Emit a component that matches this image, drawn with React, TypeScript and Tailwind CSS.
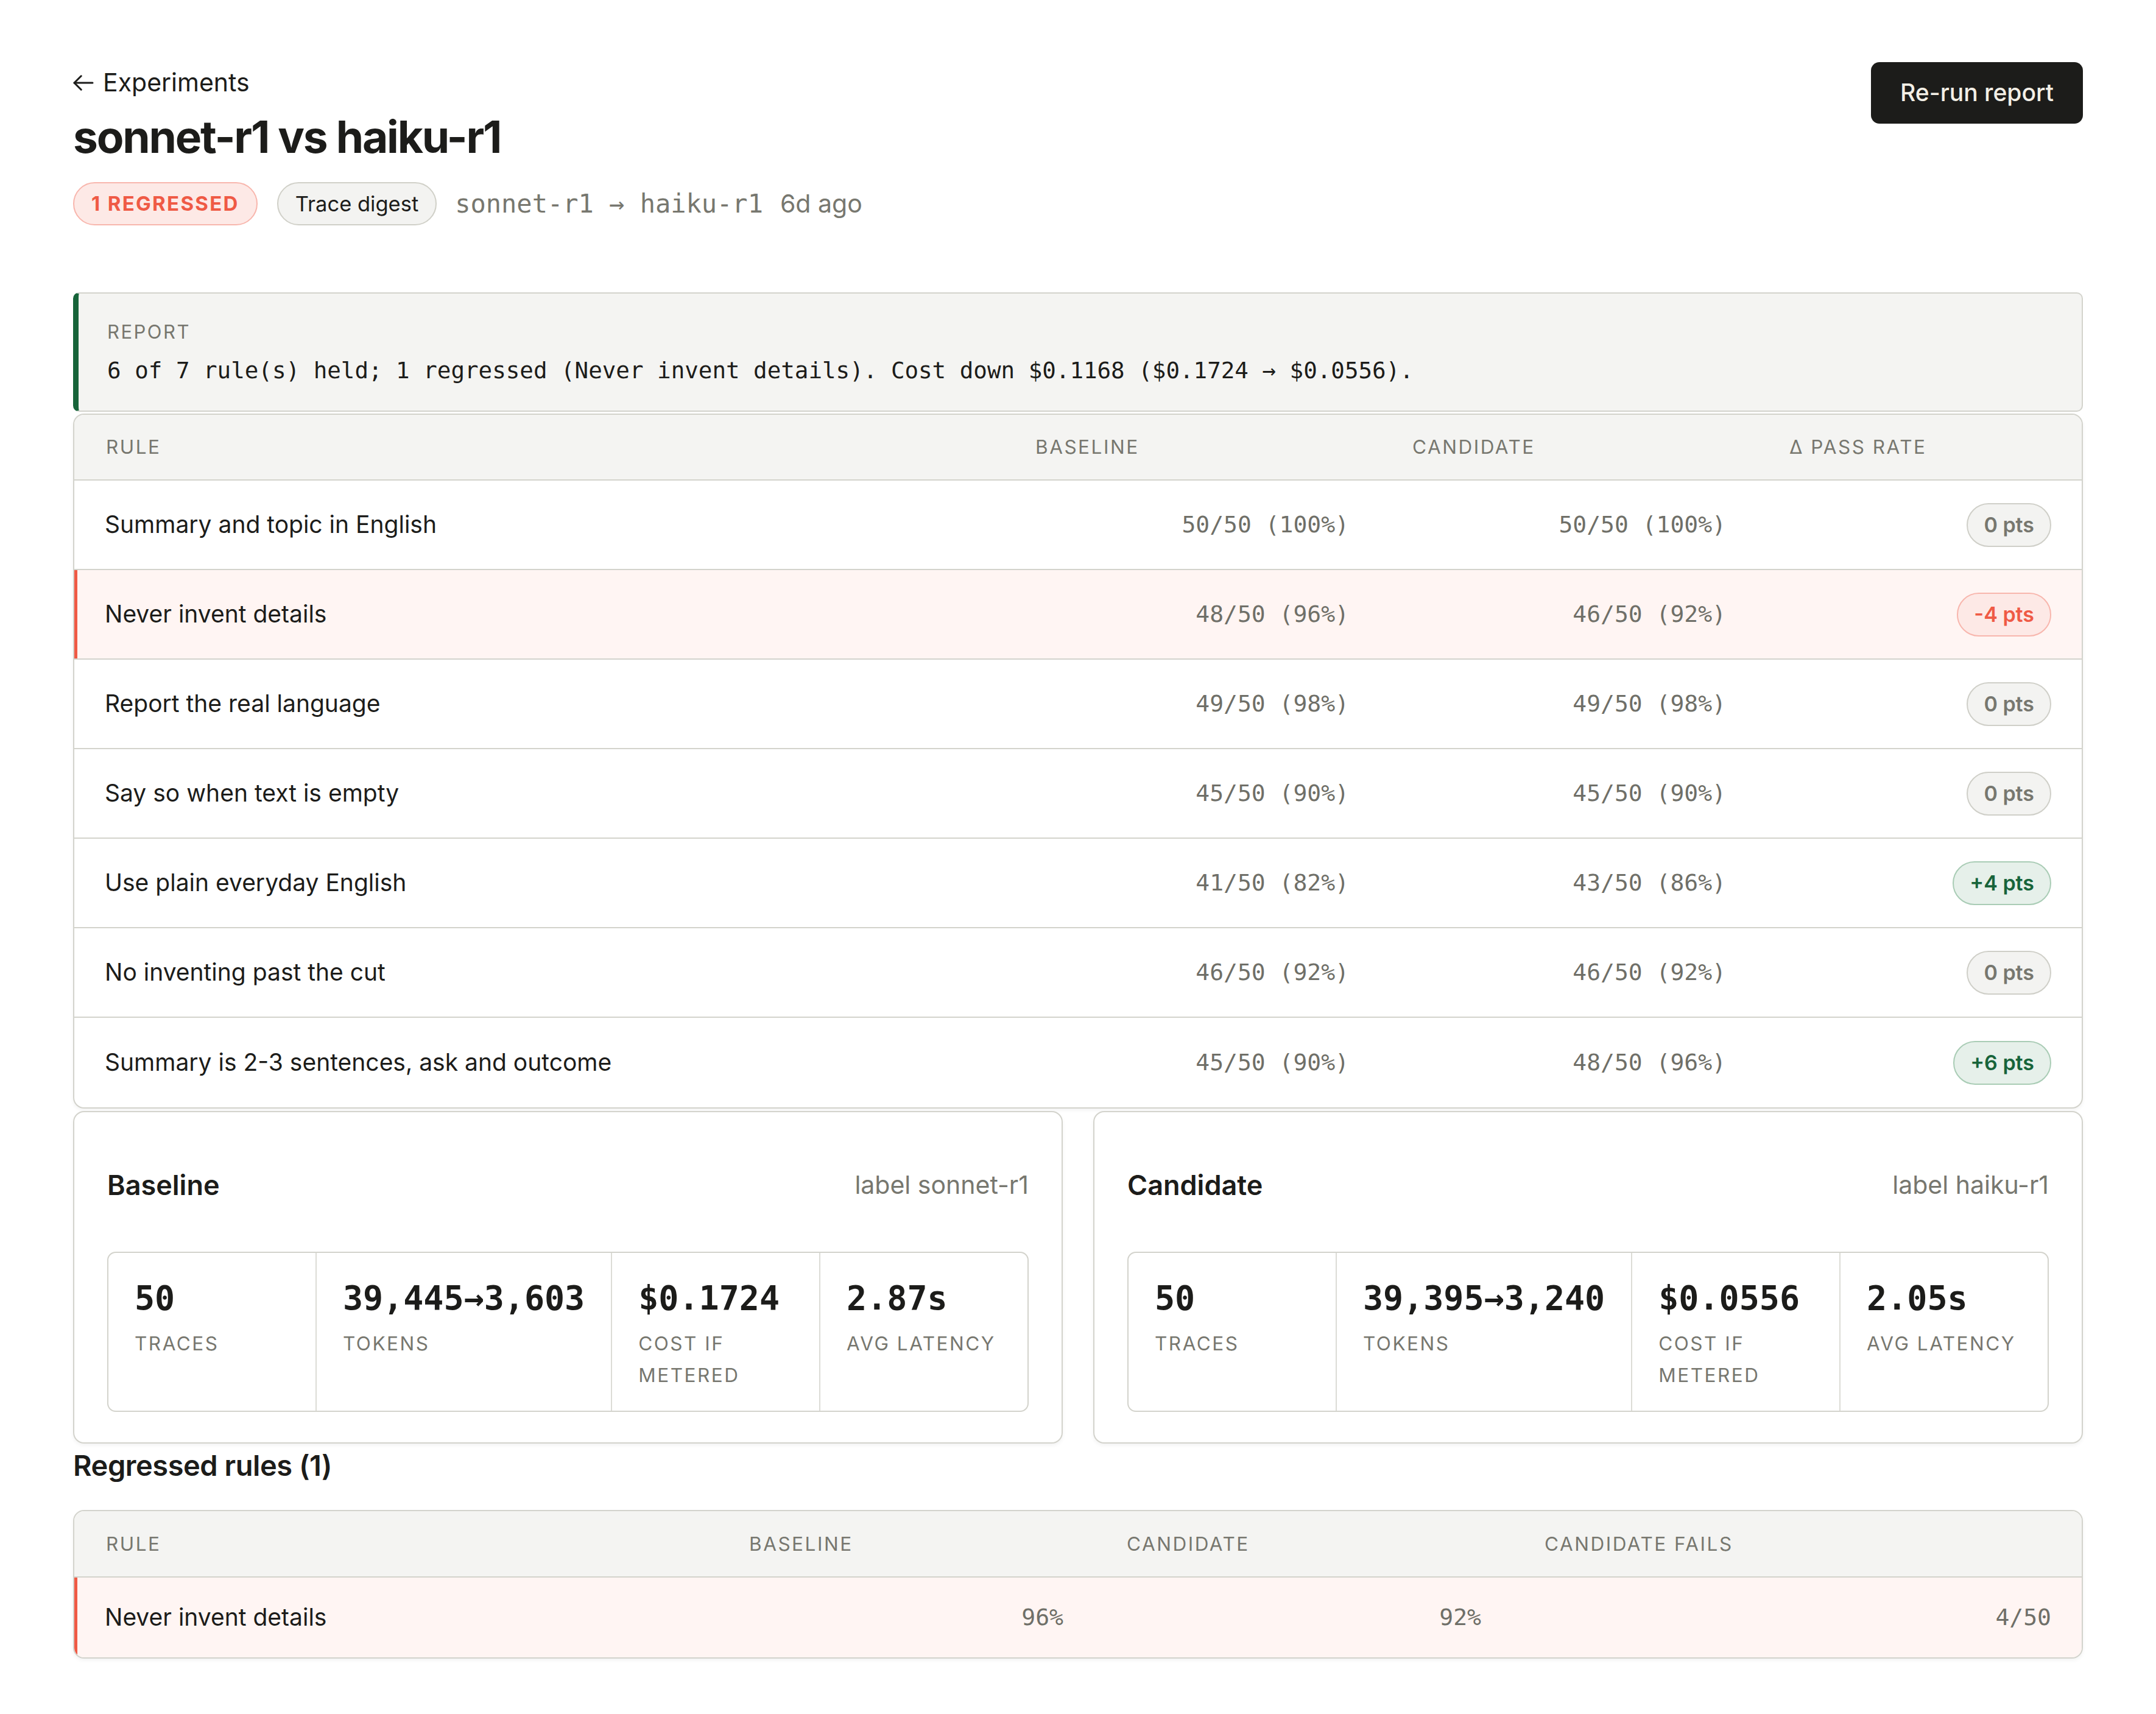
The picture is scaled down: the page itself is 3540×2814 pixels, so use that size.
import React from "react";

const sans = "font-['Inter','Noto_Sans',sans-serif]";
const mono = "font-['DejaVu_Sans_Mono','Liberation_Mono',monospace]";

type Tone = "zero" | "down" | "up";

const rules: { name: string; base: string; cand: string; delta: string; tone: Tone }[] = [
  { name: "Summary and topic in English", base: "50/50 (100%)", cand: "50/50 (100%)", delta: "0 pts", tone: "zero" },
  { name: "Never invent details", base: "48/50 (96%)", cand: "46/50 (92%)", delta: "-4 pts", tone: "down" },
  { name: "Report the real language", base: "49/50 (98%)", cand: "49/50 (98%)", delta: "0 pts", tone: "zero" },
  { name: "Say so when text is empty", base: "45/50 (90%)", cand: "45/50 (90%)", delta: "0 pts", tone: "zero" },
  { name: "Use plain everyday English", base: "41/50 (82%)", cand: "43/50 (86%)", delta: "+4 pts", tone: "up" },
  { name: "No inventing past the cut", base: "46/50 (92%)", cand: "46/50 (92%)", delta: "0 pts", tone: "zero" },
  { name: "Summary is 2-3 sentences, ask and outcome", base: "45/50 (90%)", cand: "48/50 (96%)", delta: "+6 pts", tone: "up" }
];

const pillTone: Record<Tone, string> = {
  zero: "bg-[#f3f3f1] border-[#cfcfc8] text-[#77776f]",
  down: "bg-[#fde9e6] border-[#f8b6ad] text-[#ef5a45]",
  up: "bg-[#e6f0ea] border-[#a9ccb5] text-[#17643a]"
};

const headCell = "px-[52px] text-[31.5px] tracking-[0.08em] uppercase text-[#77776f]";

const Pill = ({ label, tone }: { label: string; tone: Tone }) => (
  <span
    className={`inline-flex h-[72px] items-center rounded-full border-2 px-[26px] text-[34px] font-semibold ${pillTone[tone]}`}
  >
    {label}
  </span>
);

const StatsCard = ({
  title,
  label,
  stats
}: {
  title: string;
  label: string;
  stats: { value: string; name: string }[];
}) => (
  <div className="flex-1 rounded-[18px] border-2 border-[#d3d3cc] bg-white px-[54px] pt-[54px] pb-[50px] shadow-[0_3px_6px_rgba(0,0,0,0.05)]">
    <div className="flex h-[132px] items-center justify-between">
      <span className="text-[45px] font-semibold text-[#1c1c1a]">{title}</span>
      <span className="text-[41px] text-[#77776f]">{label}</span>
    </div>
    <div className="mt-[43px] flex divide-x-2 divide-[#dcdcd6] rounded-[14px] border-2 border-[#d3d3cc]">
      {stats.map((s, i) => (
        <div key={i} className="flex-1 px-[43px] pt-[39px] pb-[32px]">
          <div className={`${mono} text-[55px] leading-[70px] font-bold whitespace-nowrap text-[#1c1c1a]`}>
            {s.value}
          </div>
          <div className="mt-[14px] text-[31.5px] leading-[52px] tracking-[0.08em] uppercase text-[#77776f]">
            {s.name}
          </div>
        </div>
      ))}
    </div>
  </div>
);

export default function App() {
  return (
    <div className={`${sans} min-h-screen bg-white px-[120px] pt-[102px] pb-[80px] text-[#1c1c1a]`}>
      {/* header */}
      <div className="flex items-start justify-between">
        <div className="flex flex-col">
          <a className="mt-[4px] flex h-[60px] items-center gap-[15px] text-[41px] text-[#1c1c1a]">
            <svg width="34" height="30" viewBox="3 4 18 16" fill="none" stroke="currentColor" strokeWidth="1.6" strokeLinecap="round" strokeLinejoin="round">
              <path d="M20 12H4" />
              <path d="M10 18l-6-6 6-6" />
            </svg>
            Experiments
          </a>
          <h1 className="mt-[15px] text-[73px] leading-[88px] font-bold tracking-[-0.03em]">sonnet-r1 vs haiku-r1</h1>
          <div className="mt-[30px] flex items-center">
            <span className="inline-flex h-[71px] items-center rounded-full border-2 border-[#f8b6ad] bg-[#fde9e6] px-[28px] text-[33px] font-bold tracking-[0.07em] text-[#ef5a45] uppercase">
              1 regressed
            </span>
            <span className="ml-[32px] inline-flex h-[71px] items-center rounded-full border-2 border-[#d0d0c8] bg-[#f3f3f1] px-[28px] text-[34.5px] text-[#1c1c1a]">
              Trace digest
            </span>
            <span className={`${mono} ml-[30px] text-[42px] text-[#77776f]`}>sonnet-r1 → haiku-r1</span>
            <span className="ml-[28px] text-[41px] text-[#77776f]">6d ago</span>
          </div>
        </div>
        <button className="h-[101px] rounded-[14px] bg-[#1c1c1a] px-[48px] text-[39px] font-medium text-[#f3efe6]">
          Re-run report
        </button>
      </div>

      {/* report */}
      <div className="mt-[110px] rounded-[10px] border-2 border-l-[9px] border-[#d3d3cc] border-l-[#17643a] bg-[#f4f4f2] pt-[40px] pb-[37px] pl-[47px]">
        <div className="text-[31px] leading-[46px] tracking-[0.08em] text-[#77776f] uppercase">Report</div>
        <div className={`${mono} mt-[12px] text-[37.5px] leading-[57px] text-[#1c1c1a]`}>
          6 of 7 rule(s) held; 1 regressed (Never invent details). Cost down $0.1168 ($0.1724 → $0.0556).
        </div>
      </div>

      {/* rules table */}
      <div className="mt-[3px] overflow-hidden rounded-[18px] border-2 border-[#d3d3cc] bg-white shadow-[0_3px_6px_rgba(0,0,0,0.05)]">
        <div className="grid h-[108px] grid-cols-[1526px_619px_619px_1fr] items-center border-b-2 border-[#d3d3cc] bg-[#f4f4f2]">
          <div className={headCell}>Rule</div>
          <div className={headCell}>Baseline</div>
          <div className={headCell}>Candidate</div>
          <div className={headCell}>Δ pass rate</div>
        </div>
        {rules.map((r, i) => (
          <div
            key={i}
            className={`grid h-[147px] grid-cols-[1526px_619px_619px_1fr] items-center ${
              i < rules.length - 1 ? "border-b-2 border-[#d3d3cc]" : ""
            } ${r.tone === "down" ? "bg-[#fff5f3] shadow-[inset_5px_0_0_#ef5a45]" : ""}`}
          >
            <div className="px-[50px] text-[39px]">{r.name}</div>
            <div className={`${mono} px-[52px] text-right text-[38px] text-[#6f6f68]`}>{r.base}</div>
            <div className={`${mono} px-[52px] text-right text-[38px] text-[#6f6f68]`}>{r.cand}</div>
            <div className="flex justify-end px-[50px]">
              <Pill label={r.delta} tone={r.tone} />
            </div>
          </div>
        ))}
      </div>

      {/* baseline / candidate */}
      <div className="mt-[4px] flex gap-[50px]">
        <StatsCard
          title="Baseline"
          label="label sonnet-r1"
          stats={[
            { value: "50", name: "Traces" },
            { value: "39,445→3,603", name: "Tokens" },
            { value: "$0.1724", name: "Cost if metered" },
            { value: "2.87s", name: "Avg latency" }
          ]}
        />
        <StatsCard
          title="Candidate"
          label="label haiku-r1"
          stats={[
            { value: "50", name: "Traces" },
            { value: "39,395→3,240", name: "Tokens" },
            { value: "$0.0556", name: "Cost if metered" },
            { value: "2.05s", name: "Avg latency" }
          ]}
        />
      </div>

      {/* regressed rules */}
      <h2 className="mt-[8px] text-[47px] leading-[56px] font-semibold tracking-[-0.01em]">Regressed rules (1)</h2>
      <div className="mt-[45px] overflow-hidden rounded-[18px] border-2 border-[#d3d3cc] bg-white shadow-[0_3px_6px_rgba(0,0,0,0.05)]">
        <div className="grid h-[109px] grid-cols-[1056px_620px_686px_1fr] items-center border-b-2 border-[#d3d3cc] bg-[#f4f4f2]">
          <div className={headCell}>Rule</div>
          <div className={headCell}>Baseline</div>
          <div className={headCell}>Candidate</div>
          <div className={headCell}>Candidate fails</div>
        </div>
        <div className="grid h-[131px] grid-cols-[1056px_620px_686px_1fr] items-center bg-[#fff5f3] shadow-[inset_5px_0_0_#ef5a45]">
          <div className="px-[50px] text-[39px]">Never invent details</div>
          <div className={`${mono} px-[52px] text-right text-[38px] text-[#6f6f68]`}>96%</div>
          <div className={`${mono} px-[52px] text-right text-[38px] text-[#6f6f68]`}>92%</div>
          <div className={`${mono} px-[50px] text-right text-[38px] text-[#6f6f68]`}>4/50</div>
        </div>
      </div>
    </div>
  );
}
